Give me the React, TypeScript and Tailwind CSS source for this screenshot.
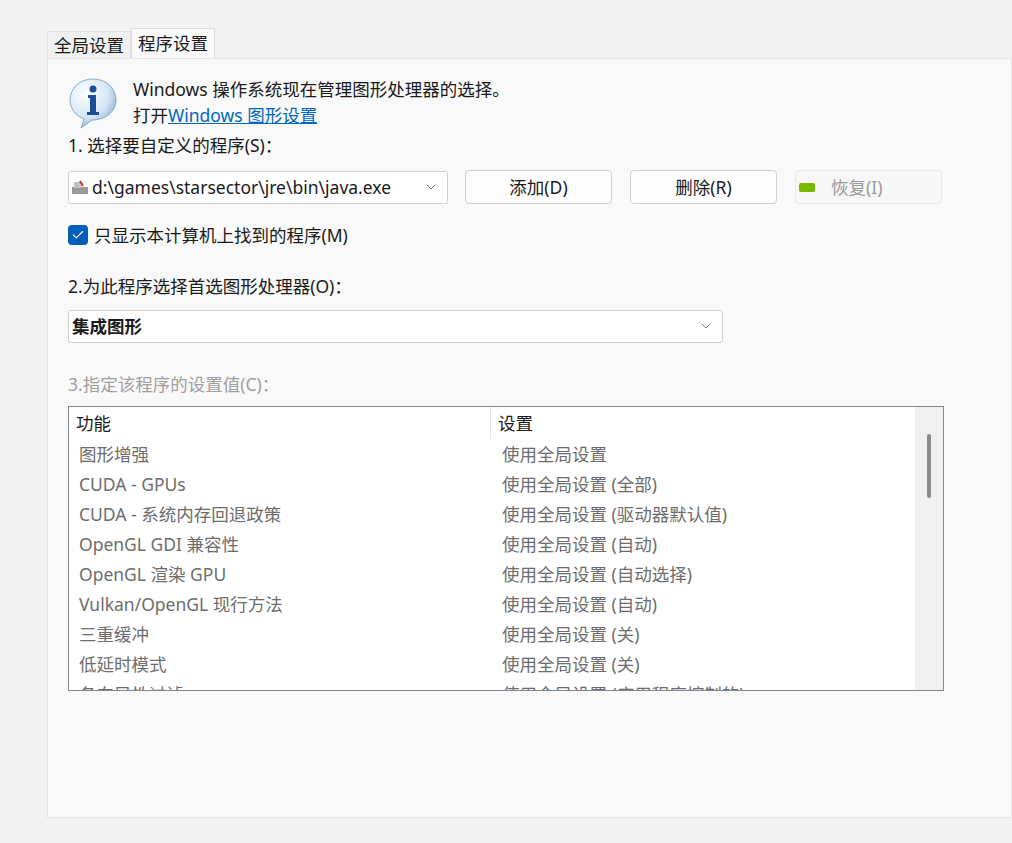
import { ChevronDown, Check } from 'lucide-react';

const rows: [string, string][] = [
  ['图形增强', '使用全局设置'],
  ['CUDA - GPUs', '使用全局设置 (全部)'],
  ['CUDA - 系统内存回退政策', '使用全局设置 (驱动器默认值)'],
  ['OpenGL GDI 兼容性', '使用全局设置 (自动)'],
  ['OpenGL 渲染 GPU', '使用全局设置 (自动选择)'],
  ['Vulkan/OpenGL 现行方法', '使用全局设置 (自动)'],
  ['三重缓冲', '使用全局设置 (关)'],
  ['低延时模式', '使用全局设置 (关)'],
  ['各向异性过滤', '使用全局设置 (应用程序控制的)'],
];

function InfoIcon() {
  return (
    <svg width="50" height="52" viewBox="0 0 50 52">
      <defs>
        <radialGradient id="ig" cx="0.35" cy="0.3" r="0.8">
          <stop offset="0" stopColor="#ffffff" />
          <stop offset="0.6" stopColor="#d6e6f5" />
          <stop offset="1" stopColor="#7fa6cc" />
        </radialGradient>
      </defs>
      <path d="M25 2C12 2 2 11 2 23c0 9 6 16 14 19l-3 9 11-8c13 0 24-8 24-20C48 11 38 2 25 2z" fill="url(#ig)" stroke="#8aa9c9" strokeWidth="1" />
      <circle cx="25" cy="12" r="3.5" fill="#1c4f9a" />
      <path d="M20 18h8v17h3v3H19v-3h3V21h-2z" fill="#1c4f9a" />
    </svg>
  );
}

export default function App() {
  return (
    <div
      className="w-[1012px] h-[843px] bg-[#f3f3f3] pl-[5px] pt-[28px] text-[17.5px] text-[#1a1a1a]"
      style={{ fontFamily: '"Segoe UI", "Noto Sans", "Noto Sans CJK SC", sans-serif' }}
    >
      <div className="flex pl-[42px] h-[30px] items-end">
        <div className="h-[27px] px-[6px] border border-[#e0e0e0] border-b-0 bg-[#f0f0f0] flex items-center">全局设置</div>
        <div className="h-[30px] px-[6px] border border-[#d9d9d9] border-b-0 bg-[#f9f9f9] flex items-center">程序设置</div>
      </div>
      <div className="ml-[42px] w-[965px] h-[760px] bg-[#f9f9f9] border border-[#e5e5e5] pl-[20px] pt-[18px]">
        <div className="flex gap-[15px]">
          <InfoIcon />
          <div className="leading-[26px] -mt-[1px]">
            <div>Windows 操作系统现在管理图形处理器的选择。</div>
            <div>打开<span className="text-[#0067c0] underline">Windows 图形设置</span></div>
          </div>
        </div>
        <div className="mt-[3px] leading-[26px]">1. 选择要自定义的程序(S)：</div>
        <div className="mt-[12px] flex items-center">
          <div className="w-[380px] h-[33px] bg-white border border-[#d0d0d0] rounded-[3px] flex items-center pl-[2px] pr-[8px]">
            <svg width="18" height="16" viewBox="0 0 18 16" className="mr-[3px]">
              <rect x="1" y="8" width="16" height="7" fill="#9a9a9a" />
              <rect x="3" y="3" width="7" height="6" fill="#c0c0c0" />
              <path d="M9 2l3 5" stroke="#c33" strokeWidth="2" />
            </svg>
            <span className="flex-1">d:\games\starsector\jre\bin\java.exe</span>
            <ChevronDown size={16} strokeWidth={1.2} className="text-[#555]" />
          </div>
          <div className="ml-[17px] w-[147px] h-[34px] bg-[#fdfdfd] border border-[#d0d0d0] rounded-[4px] flex items-center justify-center">添加(D)</div>
          <div className="ml-[18px] w-[147px] h-[34px] bg-[#fdfdfd] border border-[#d0d0d0] rounded-[4px] flex items-center justify-center">删除(R)</div>
          <div className="ml-[18px] w-[147px] h-[34px] bg-[#f7f7f7] border border-[#e8e8e8] rounded-[4px] flex items-center text-[#9a9a9a]">
            <span className="ml-[3px] w-[16px] h-[9px] bg-[#76b900] rounded-[2px]" />
            <span className="ml-[16px]">恢复(I)</span>
          </div>
        </div>
        <div className="mt-[18px] flex items-center gap-[6px]">
          <div className="w-[20px] h-[20px] rounded-[4px] bg-[#005fb8] flex items-center justify-center">
            <Check size={14} strokeWidth={2} className="text-white" />
          </div>
          <span>只显示本计算机上找到的程序(M)</span>
        </div>
        <div className="mt-[25px]">2.为此程序选择首选图形处理器(O)：</div>
        <div className="mt-[10px] w-[655px] h-[33px] bg-white border border-[#d0d0d0] rounded-[3px] flex items-center pl-[3px] pr-[8px] font-bold">
          <span className="flex-1">集成图形</span>
          <ChevronDown size={16} strokeWidth={1.2} className="text-[#555] font-normal" />
        </div>
        <div className="mt-[28px] text-[#a0a0a0]">3.指定该程序的设置值(C)：</div>
        <div className="mt-[9px] w-[876px] h-[285px] border border-[#828790] bg-white flex overflow-hidden">
          <div className="flex-1 flex flex-col">
            <div className="h-[32px] flex items-center shrink-0">
              <div className="w-[422px] h-full border-r border-[#e5e5e5] pl-[7px] flex items-center">功能</div>
              <div className="pl-[7px]">设置</div>
            </div>
            {rows.map(([a, b]) => (
              <div key={a} className="h-[30px] flex items-center text-[#6d6d6d] shrink-0">
                <div className="w-[422px] pl-[10px]">{a}</div>
                <div className="pl-[11px]">{b}</div>
              </div>
            ))}
          </div>
          <div className="w-[28px] bg-[#f0f0f0] pt-[27px] flex justify-center">
            <div className="w-[4px] h-[64px] rounded-full bg-[#8a8a8a]" />
          </div>
        </div>
      </div>
    </div>
  );
}
